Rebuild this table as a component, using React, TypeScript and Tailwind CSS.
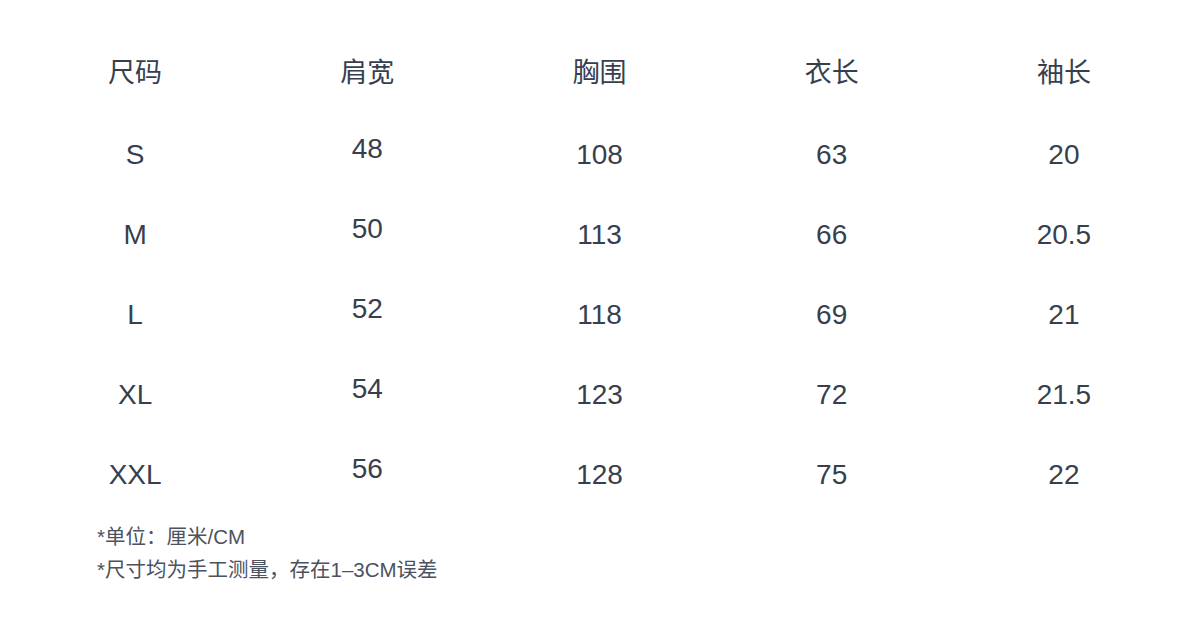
const headers = ["尺码", "肩宽", "胸围", "衣长", "袖长"];

const rows = [
  ["S", "48", "108", "63", "20"],
  ["M", "50", "113", "66", "20.5"],
  ["L", "52", "118", "69", "21"],
  ["XL", "54", "123", "72", "21.5"],
  ["XXL", "56", "128", "75", "22"],
];

export default function App() {
  return (
    <div
      className="w-[1200px] h-[617px] bg-white text-[#373f4f] pt-[31px]"
      style={{ fontFamily: '"Liberation Sans", "Noto Sans CJK SC", sans-serif' }}
    >
      {/* Size chart */}
      <div className="w-[1161px] ml-[19px]">
        <div className="grid grid-cols-5 h-[84px] items-center text-[27px]">
          {headers.map((h) => (
            <div key={h} className="text-center">
              {h}
            </div>
          ))}
        </div>
        {rows.map((row) => (
          <div key={row[0]} className="grid grid-cols-5 h-[80px] items-center text-[28px]">
            {row.map((cell, i) => (
              <div key={i} className={i === 1 ? "text-center mb-3" : "text-center"}>
                {cell}
              </div>
            ))}
          </div>
        ))}
      </div>

      {/* Notes */}
      <div className="mt-[5px] pl-[97px] text-[20.5px] leading-[33px] text-[#4b5260]">
        <div>*单位：厘米/CM</div>
        <div>*尺寸均为手工测量，存在1–3CM误差</div>
      </div>
    </div>
  );
}
